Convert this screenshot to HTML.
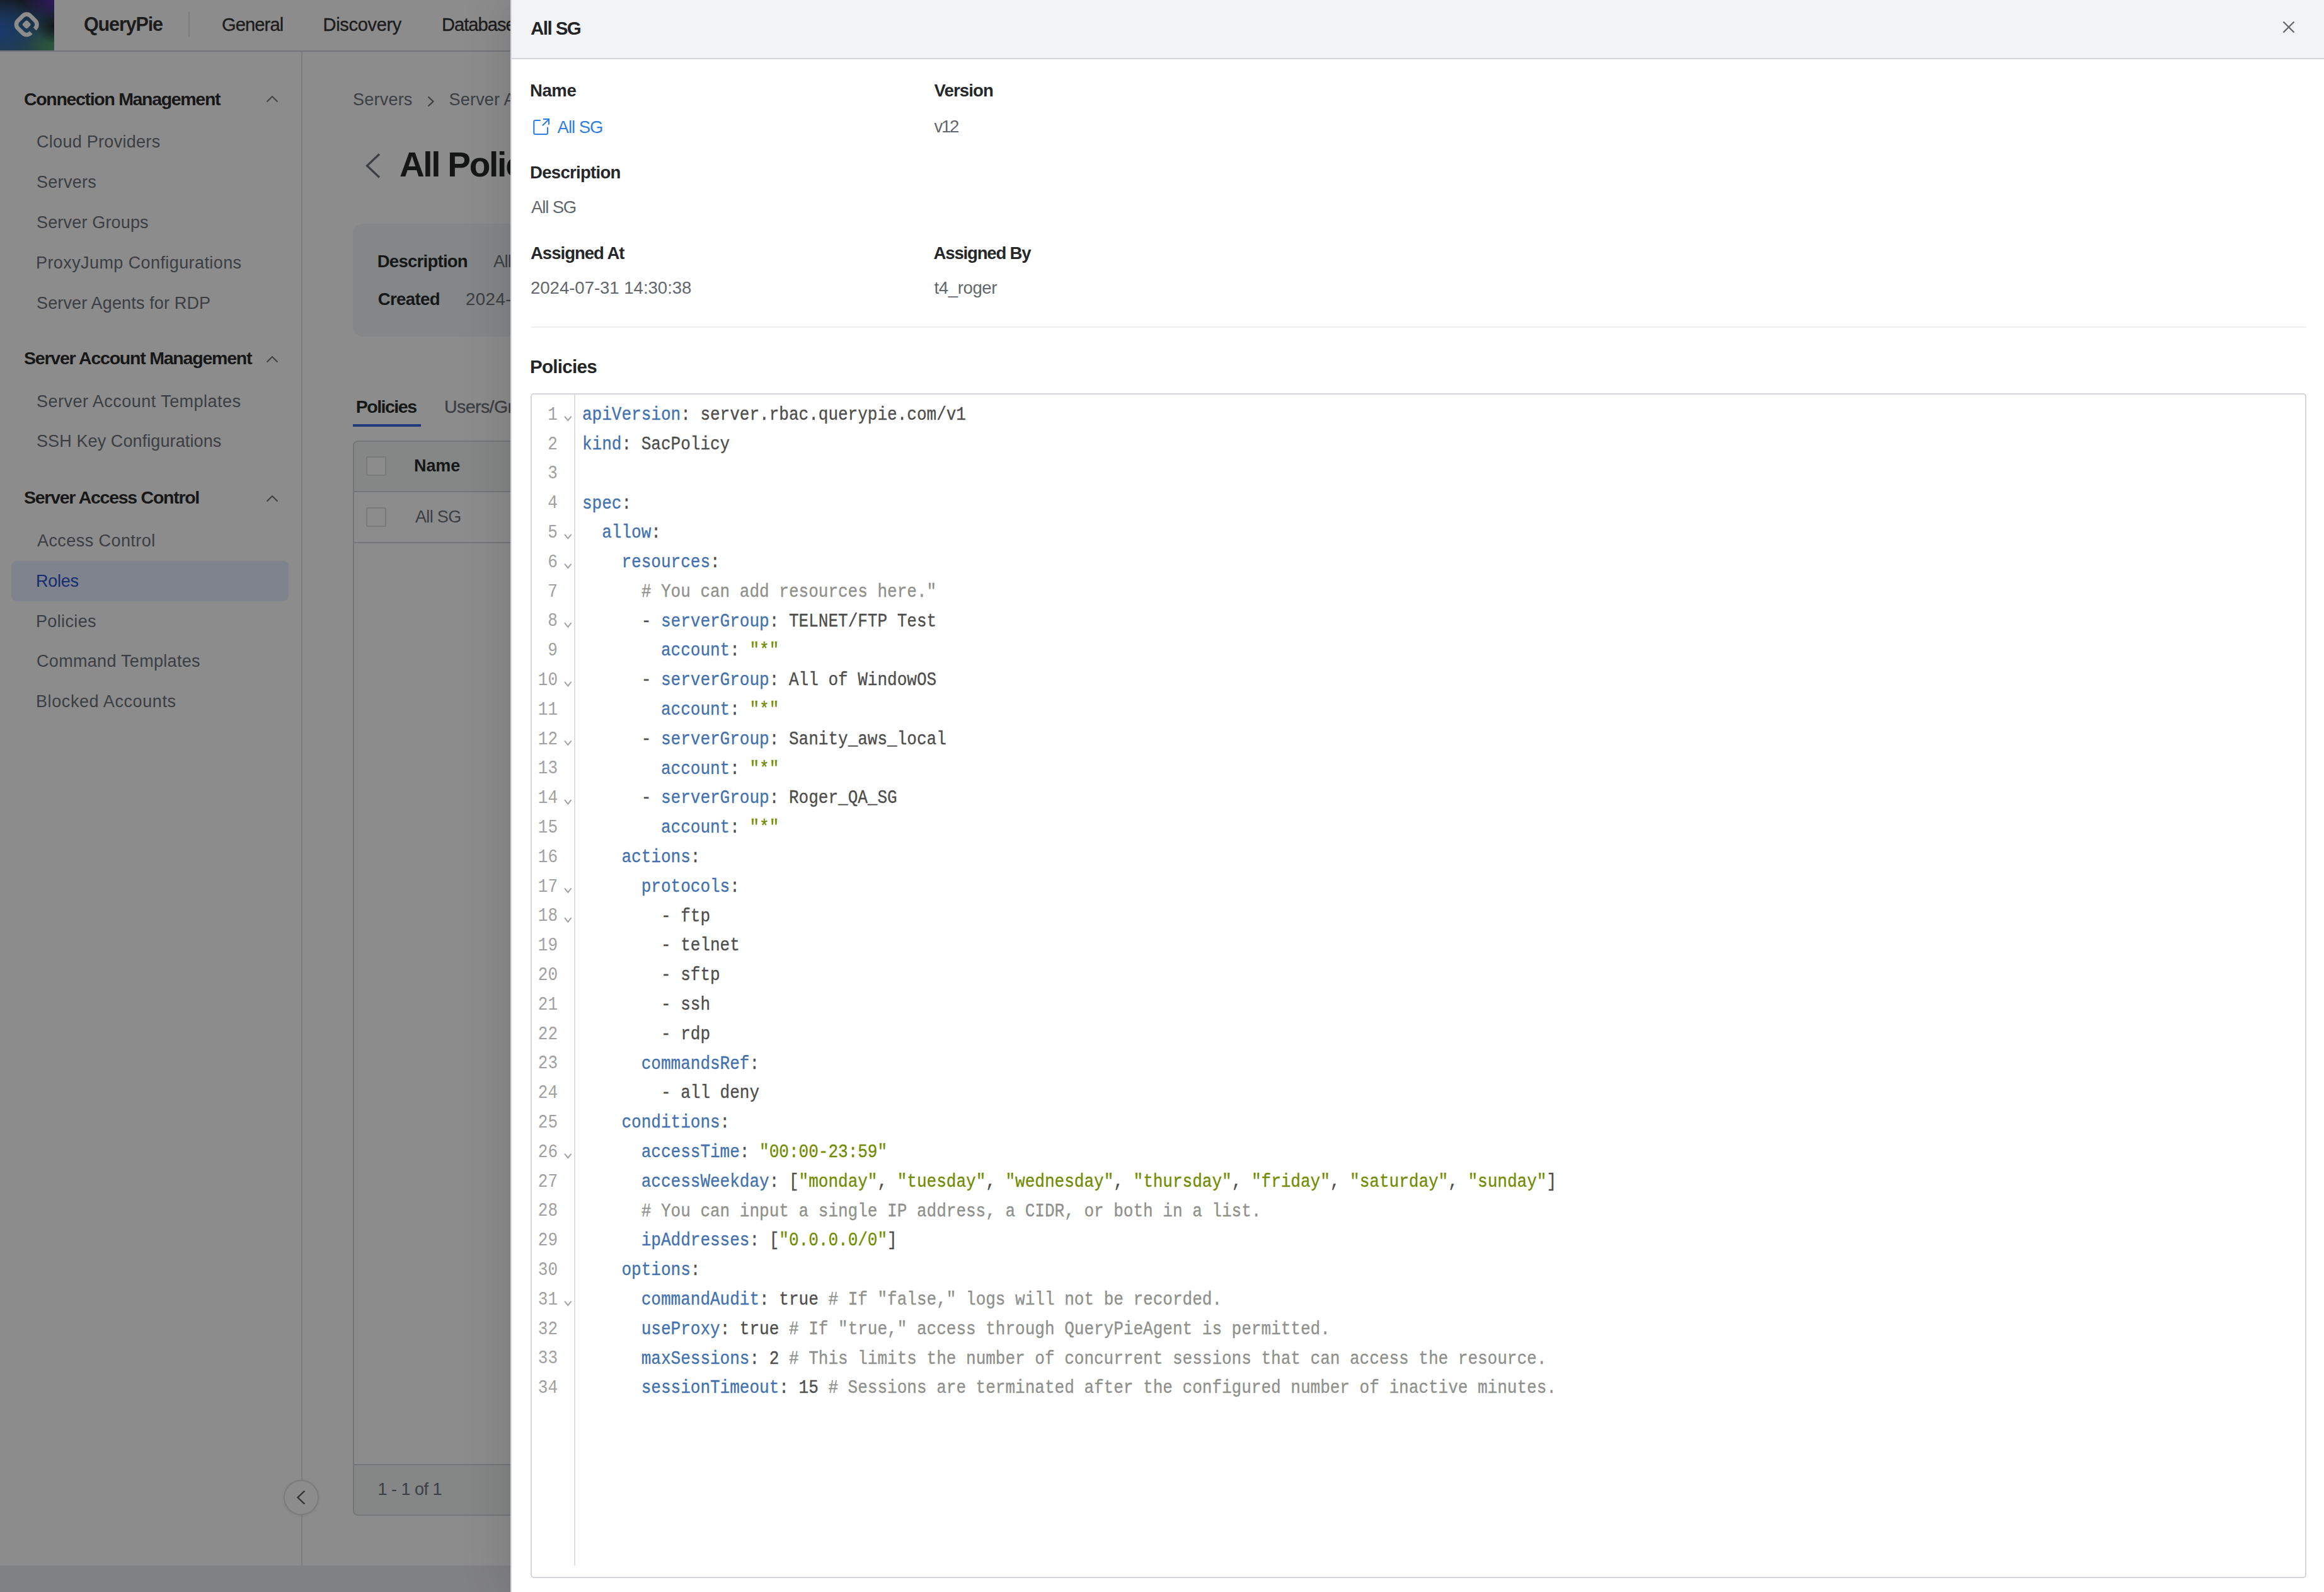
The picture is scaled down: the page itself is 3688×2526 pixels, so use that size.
<!DOCTYPE html><html><head><meta charset="utf-8"><title>QueryPie</title><style>
*{box-sizing:border-box}
html,body{margin:0;padding:0}
body{width:3688px;height:2526px;position:relative;overflow:hidden;background:#8c8c8c;font-family:'Liberation Sans',sans-serif}
.t{position:absolute;white-space:pre}
.a{position:absolute}
.code{position:absolute;left:924px;top:635.12px;font-family:'Liberation Mono',monospace;font-size:30px;line-height:46.8px;color:#4d4d4c;white-space:pre;-webkit-text-stroke:0.35px currentColor;transform:scaleX(0.86736);transform-origin:0 0}
.code div{height:46.8px}
.k{color:#4271ae} .s{color:#718c00} .c{color:#8e908c}
.gut{position:absolute;left:0;width:885px;transform:scaleX(0.86736);transform-origin:885px 0;top:634.82px;font-family:'Liberation Mono',monospace;font-size:30px;line-height:46.8px;color:#a0a0a0;white-space:pre;text-align:right}
</style></head><body>
<div class="a" style="left:0;top:80px;width:3688px;height:2px;background:#737578"></div>
<div class="a" style="left:0;top:0;width:86px;height:80px;background:radial-gradient(ellipse 60% 40% at 100% 0%,#30195c 0,rgba(48,25,92,0) 100%),radial-gradient(ellipse 35% 35% at 100% 52%,#131718 0,rgba(19,23,24,0) 100%),radial-gradient(ellipse 70% 70% at 0% 62%,#1b3a6c 0,rgba(27,58,108,0) 100%),radial-gradient(ellipse 60% 60% at 100% 100%,#2e5a3b 0,rgba(46,90,59,0) 100%),linear-gradient(180deg,#151a24 0%,#1a2c3e 35%,#1f3d4c 70%,#223f48 100%)"></div>
<svg class="a" style="left:0;top:0" width="86" height="80" viewBox="0 0 86 80"><g transform="translate(42.2 38.9) rotate(45)"><rect x="-14" y="-14" width="28" height="28" rx="8.5" fill="none" stroke="#8c8c8c" stroke-width="6.6" stroke-dasharray="25.6 8.2 63.6"/><rect x="-5.3" y="-5.3" width="10.6" height="10.6" rx="3" fill="#8c8c8c"/></g></svg>
<div class="t" style="left:133px;top:23.07px;font-size:30.5px;line-height:30.5px;font-weight:700;letter-spacing:-1.14px;color:#1c1c1c;">QueryPie</div>
<div class="a" style="left:299px;top:19px;width:2px;height:40px;background:#7b7c7e"></div>
<div class="t" style="left:352px;top:24.85px;font-size:29px;line-height:29px;font-weight:400;letter-spacing:-0.83px;color:#1c1c1c;-webkit-text-stroke:0.35px #1c1c1c;">General</div>
<div class="t" style="left:512.5px;top:24.85px;font-size:29px;line-height:29px;font-weight:400;letter-spacing:-0.31px;color:#1c1c1c;-webkit-text-stroke:0.35px #1c1c1c;">Discovery</div>
<div class="t" style="left:701px;top:24.85px;font-size:29px;line-height:29px;font-weight:400;letter-spacing:-0.92px;color:#1c1c1c;-webkit-text-stroke:0.35px #1c1c1c;">Databases</div>
<div class="a" style="left:478px;top:82px;width:2px;height:2402px;background:#7b7c7e"></div>
<div class="t" style="left:38px;top:143.28px;font-size:28.5px;line-height:28.5px;font-weight:700;letter-spacing:-1.32px;color:#171717;">Connection Management</div>
<div class="t" style="left:38px;top:554.38px;font-size:28.5px;line-height:28.5px;font-weight:700;letter-spacing:-1.22px;color:#171717;">Server Account Management</div>
<div class="t" style="left:38px;top:775.17px;font-size:28.5px;line-height:28.5px;font-weight:700;letter-spacing:-1.27px;color:#171717;">Server Access Control</div>
<svg class="a" style="left:420px;top:147px" width="24" height="20" viewBox="0 0 24 20"><polyline points="3.5,14.5 12,6 20.5,14.5" fill="none" stroke="#3b3e42" stroke-width="1.9"/></svg>
<svg class="a" style="left:420px;top:559.5px" width="24" height="20" viewBox="0 0 24 20"><polyline points="3.5,14.5 12,6 20.5,14.5" fill="none" stroke="#3b3e42" stroke-width="1.9"/></svg>
<svg class="a" style="left:420px;top:780.5px" width="24" height="20" viewBox="0 0 24 20"><polyline points="3.5,14.5 12,6 20.5,14.5" fill="none" stroke="#3b3e42" stroke-width="1.9"/></svg>
<div class="a" style="left:18px;top:890px;width:440px;height:64px;border-radius:9px;background:#7f838e"></div>
<div class="t" style="left:58px;top:212.15px;font-size:27px;line-height:27px;font-weight:400;letter-spacing:0.29px;color:#3b3e42;">Cloud Providers</div>
<div class="t" style="left:58px;top:276.15px;font-size:27px;line-height:27px;font-weight:400;letter-spacing:0.3px;color:#3b3e42;">Servers</div>
<div class="t" style="left:58px;top:339.75px;font-size:27px;line-height:27px;font-weight:400;letter-spacing:0.17px;color:#3b3e42;">Server Groups</div>
<div class="t" style="left:57px;top:403.85px;font-size:27px;line-height:27px;font-weight:400;letter-spacing:0.41px;color:#3b3e42;">ProxyJump Configurations</div>
<div class="t" style="left:58px;top:467.95px;font-size:27px;line-height:27px;font-weight:400;letter-spacing:0.15px;color:#3b3e42;">Server Agents for RDP</div>
<div class="t" style="left:58px;top:623.85px;font-size:27px;line-height:27px;font-weight:400;letter-spacing:0.47px;color:#3b3e42;">Server Account Templates</div>
<div class="t" style="left:58px;top:687.45px;font-size:27px;line-height:27px;font-weight:400;letter-spacing:0.1px;color:#3b3e42;">SSH Key Configurations</div>
<div class="t" style="left:59px;top:845.45px;font-size:27px;line-height:27px;font-weight:400;letter-spacing:0.43px;color:#3b3e42;">Access Control</div>
<div class="t" style="left:57px;top:909.45px;font-size:27px;line-height:27px;font-weight:400;letter-spacing:-0.25px;color:#162d6e;">Roles</div>
<div class="t" style="left:57px;top:973.05px;font-size:27px;line-height:27px;font-weight:400;letter-spacing:0.36px;color:#3b3e42;">Policies</div>
<div class="t" style="left:58px;top:1035.85px;font-size:27px;line-height:27px;font-weight:400;letter-spacing:0.31px;color:#3b3e42;">Command Templates</div>
<div class="t" style="left:57px;top:1100.35px;font-size:27px;line-height:27px;font-weight:400;letter-spacing:0.59px;color:#3b3e42;">Blocked Accounts</div>
<div class="t" style="left:560px;top:145.05px;font-size:27px;line-height:27px;font-weight:400;letter-spacing:0.22px;color:#3b3e42;">Servers</div>
<svg class="a" style="left:674px;top:150px" width="20" height="22" viewBox="0 0 20 22"><polyline points="5.5,3.5 13.5,11 5.5,18.5" fill="none" stroke="#3b3e42" stroke-width="2.2"/></svg>
<div class="t" style="left:712.4px;top:145.05px;font-size:27px;line-height:27px;font-weight:400;letter-spacing:0.24px;color:#3b3e42;">Server Access Control</div>
<svg class="a" style="left:574px;top:240px" width="34" height="46" viewBox="0 0 34 46"><polyline points="28,4.5 8.5,23 28,41.5" fill="none" stroke="#3b3e42" stroke-width="3.3"/></svg>
<div class="t" style="left:633.9px;top:234.05px;font-size:55px;line-height:55px;font-weight:700;letter-spacing:-2.27px;color:#151616;">All Policies</div>
<div class="a" style="left:560px;top:355px;width:600px;height:179px;border-radius:16px;background:#858688"></div>
<div class="t" style="left:598.7px;top:400.62px;font-size:27.5px;line-height:27.5px;font-weight:700;letter-spacing:-0.73px;color:#161717;">Description</div>
<div class="t" style="left:783px;top:400.62px;font-size:27.5px;line-height:27.5px;font-weight:400;letter-spacing:-0.86px;color:#3b3e42;">All SG</div>
<div class="t" style="left:599.7px;top:460.73px;font-size:27.5px;line-height:27.5px;font-weight:700;letter-spacing:-0.58px;color:#161717;">Created</div>
<div class="t" style="left:739px;top:460.73px;font-size:27.5px;line-height:27.5px;font-weight:400;letter-spacing:0.5px;color:#3b3e42;">2024-07-31 14:30:38</div>
<div class="t" style="left:564.7px;top:630.88px;font-size:28.5px;line-height:28.5px;font-weight:700;letter-spacing:-1.49px;color:#161717;">Policies</div>
<div class="t" style="left:705px;top:630.88px;font-size:28.5px;line-height:28.5px;font-weight:400;letter-spacing:-0.57px;color:#3b3e42;-webkit-text-stroke:0.35px #3b3e42;">Users/Groups</div>
<div class="a" style="left:560px;top:673px;width:108px;height:4px;background:#21397d"></div>
<div class="a" style="left:560px;top:699px;width:700px;height:1706px;border:2px solid #747578;border-radius:8px;background:#8c8c8c;overflow:hidden"><div class="a" style="left:0;top:0;width:700px;height:80px;background:#858787;border-bottom:2px solid #747578"></div><div class="a" style="left:0;top:159px;width:700px;height:2px;background:#747578"></div><div class="a" style="left:0;top:1622px;width:700px;height:82px;background:#858787;border-top:2px solid #747578"></div></div>
<div class="a" style="left:581px;top:723.5px;width:31.5px;height:31px;border:2px solid #78797b;border-radius:3px;background:#8c8c8c"></div>
<div class="a" style="left:581px;top:804.5px;width:31.5px;height:31px;border:2px solid #78797b;border-radius:3px;background:#8c8c8c"></div>
<div class="t" style="left:657px;top:726.35px;font-size:27px;line-height:27px;font-weight:700;letter-spacing:-0.1px;color:#161717;">Name</div>
<div class="t" style="left:659px;top:807.05px;font-size:27px;line-height:27px;font-weight:400;letter-spacing:-0.66px;color:#3b3e42;">All SG</div>
<div class="t" style="left:599.6px;top:2350.05px;font-size:27px;line-height:27px;font-weight:400;letter-spacing:-0.51px;color:#3b3e42;">1 - 1 of 1</div>
<div class="a" style="left:0;top:2484px;width:3688px;height:42px;background:#808183"></div>
<div class="a" style="left:450px;top:2348px;width:56px;height:56px;border-radius:50%;border:2px solid #7b7c7e;background:#8c8c8c;box-shadow:0 1px 4px rgba(0,0,0,0.08)"></div>
<svg class="a" style="left:466px;top:2360px" width="24" height="32" viewBox="0 0 24 32"><polyline points="17.5,5.5 6.5,16 17.5,26.5" fill="none" stroke="#2d3033" stroke-width="2.3"/></svg>
<div class="a" style="left:810px;top:0;width:2878px;height:2526px;background:#fff;box-shadow:-6px 0 70px rgba(0,0,0,0.13)"></div>
<div class="a" style="left:810px;top:0;width:2px;height:2526px;background:#d6d8dc"></div>
<div class="a" style="left:812px;top:0;width:2876px;height:92px;background:#f2f3f5;border-bottom:2px solid #d1d3d8;height:94px"></div>
<div class="t" style="left:842px;top:29.82px;font-size:29.5px;line-height:29.5px;font-weight:700;letter-spacing:-1.54px;color:#222426;">All SG</div>
<svg class="a" style="left:3618px;top:29px" width="28" height="28" viewBox="0 0 28 28"><path d="M5.5 5.5L22.5 22.5M22.5 5.5L5.5 22.5" stroke="#62676b" stroke-width="2.3" fill="none"/></svg>
<div class="t" style="left:841px;top:129.82px;font-size:27.5px;line-height:27.5px;font-weight:700;letter-spacing:-0.4px;color:#25272a;">Name</div>
<svg class="a" style="left:838px;top:180px" width="40" height="40" viewBox="838 180 40 40"><path d="M857.8 191H849.3Q847.3 191 847.3 193V211Q847.3 213 849.3 213H867Q869 213 869 211V201.8" fill="none" stroke="#2b7de0" stroke-width="2.1"/><path d="M860.9 199.3L870.3 189.9M862 189H871V197.8" fill="none" stroke="#2b7de0" stroke-width="2.1"/></svg>
<div class="t" style="left:884.6px;top:187.62px;font-size:27.5px;line-height:27.5px;font-weight:400;letter-spacing:-1.04px;color:#2f7fe0;">All SG</div>
<div class="t" style="left:1482.6px;top:129.93px;font-size:27.5px;line-height:27.5px;font-weight:700;letter-spacing:-0.87px;color:#25272a;">Version</div>
<div class="t" style="left:1482.6px;top:186.82px;font-size:27.5px;line-height:27.5px;font-weight:400;letter-spacing:-2.3px;color:#61676d;">v12</div>
<div class="t" style="left:841px;top:259.73px;font-size:27.5px;line-height:27.5px;font-weight:700;letter-spacing:-0.69px;color:#25272a;">Description</div>
<div class="t" style="left:843px;top:314.93px;font-size:27.5px;line-height:27.5px;font-weight:400;letter-spacing:-1.14px;color:#61676d;">All SG</div>
<div class="t" style="left:842px;top:387.52px;font-size:27.5px;line-height:27.5px;font-weight:700;letter-spacing:-0.99px;color:#25272a;">Assigned At</div>
<div class="t" style="left:842px;top:443.12px;font-size:27.5px;line-height:27.5px;font-weight:400;letter-spacing:0px;color:#61676d;">2024-07-31 14:30:38</div>
<div class="t" style="left:1481.6px;top:387.52px;font-size:27.5px;line-height:27.5px;font-weight:700;letter-spacing:-1.16px;color:#25272a;">Assigned By</div>
<div class="t" style="left:1482.6px;top:443.12px;font-size:27.5px;line-height:27.5px;font-weight:400;letter-spacing:-0.37px;color:#61676d;">t4_roger</div>
<div class="t" style="left:841px;top:566.92px;font-size:29.5px;line-height:29.5px;font-weight:700;letter-spacing:-0.71px;color:#222426;">Policies</div>
<div class="a" style="left:843px;top:518px;width:2817px;height:2px;background:#efeff0"></div>
<div class="a" style="left:842px;top:624px;width:2818px;height:1880px;border:2px solid #d3d5da;border-radius:5px"></div>
<div class="a" style="left:911px;top:626px;width:2px;height:1858px;background:#dedfe1"></div>
<div class="gut"><div>1</div><div>2</div><div>3</div><div>4</div><div>5</div><div>6</div><div>7</div><div>8</div><div>9</div><div>10</div><div>11</div><div>12</div><div>13</div><div>14</div><div>15</div><div>16</div><div>17</div><div>18</div><div>19</div><div>20</div><div>21</div><div>22</div><div>23</div><div>24</div><div>25</div><div>26</div><div>27</div><div>28</div><div>29</div><div>30</div><div>31</div><div>32</div><div>33</div><div>34</div></div>
<svg class="a" style="left:0;top:0" width="920" height="2526" viewBox="0 0 920 2526"><polyline points="896,660.6 901.3,667.2 906.6,660.6" fill="none" stroke="#a3a3a3" stroke-width="2"/><polyline points="896,847.8 901.3,854.4 906.6,847.8" fill="none" stroke="#a3a3a3" stroke-width="2"/><polyline points="896,894.6 901.3,901.2 906.6,894.6" fill="none" stroke="#a3a3a3" stroke-width="2"/><polyline points="896,988.2 901.3,994.8 906.6,988.2" fill="none" stroke="#a3a3a3" stroke-width="2"/><polyline points="896,1081.8 901.3,1088.4 906.6,1081.8" fill="none" stroke="#a3a3a3" stroke-width="2"/><polyline points="896,1175.4 901.3,1182.0 906.6,1175.4" fill="none" stroke="#a3a3a3" stroke-width="2"/><polyline points="896,1269.0 901.3,1275.6 906.6,1269.0" fill="none" stroke="#a3a3a3" stroke-width="2"/><polyline points="896,1409.4 901.3,1416.0 906.6,1409.4" fill="none" stroke="#a3a3a3" stroke-width="2"/><polyline points="896,1456.2 901.3,1462.8 906.6,1456.2" fill="none" stroke="#a3a3a3" stroke-width="2"/><polyline points="896,1830.6 901.3,1837.2 906.6,1830.6" fill="none" stroke="#a3a3a3" stroke-width="2"/><polyline points="896,2064.6 901.3,2071.2 906.6,2064.6" fill="none" stroke="#a3a3a3" stroke-width="2"/></svg>
<div class="code"><div><span class="k">apiVersion</span>: server.rbac.querypie.com/v1</div><div><span class="k">kind</span>: SacPolicy</div><div></div><div><span class="k">spec</span>:</div><div>  <span class="k">allow</span>:</div><div>    <span class="k">resources</span>:</div><div>      <span class="c"># You can add resources here.&quot;</span></div><div>      - <span class="k">serverGroup</span>: TELNET/FTP Test</div><div>        <span class="k">account</span>: <span class="s">&quot;*&quot;</span></div><div>      - <span class="k">serverGroup</span>: All of WindowOS</div><div>        <span class="k">account</span>: <span class="s">&quot;*&quot;</span></div><div>      - <span class="k">serverGroup</span>: Sanity_aws_local</div><div>        <span class="k">account</span>: <span class="s">&quot;*&quot;</span></div><div>      - <span class="k">serverGroup</span>: Roger_QA_SG</div><div>        <span class="k">account</span>: <span class="s">&quot;*&quot;</span></div><div>    <span class="k">actions</span>:</div><div>      <span class="k">protocols</span>:</div><div>        - ftp</div><div>        - telnet</div><div>        - sftp</div><div>        - ssh</div><div>        - rdp</div><div>      <span class="k">commandsRef</span>:</div><div>        - all deny</div><div>    <span class="k">conditions</span>:</div><div>      <span class="k">accessTime</span>: <span class="s">&quot;00:00-23:59&quot;</span></div><div>      <span class="k">accessWeekday</span>: [<span class="s">&quot;monday&quot;</span>, <span class="s">&quot;tuesday&quot;</span>, <span class="s">&quot;wednesday&quot;</span>, <span class="s">&quot;thursday&quot;</span>, <span class="s">&quot;friday&quot;</span>, <span class="s">&quot;saturday&quot;</span>, <span class="s">&quot;sunday&quot;</span>]</div><div>      <span class="c"># You can input a single IP address, a CIDR, or both in a list.</span></div><div>      <span class="k">ipAddresses</span>: [<span class="s">&quot;0.0.0.0/0&quot;</span>]</div><div>    <span class="k">options</span>:</div><div>      <span class="k">commandAudit</span>: true <span class="c"># If &quot;false,&quot; logs will not be recorded.</span></div><div>      <span class="k">useProxy</span>: true <span class="c"># If &quot;true,&quot; access through QueryPieAgent is permitted.</span></div><div>      <span class="k">maxSessions</span>: 2 <span class="c"># This limits the number of concurrent sessions that can access the resource.</span></div><div>      <span class="k">sessionTimeout</span>: 15 <span class="c"># Sessions are terminated after the configured number of inactive minutes.</span></div></div>
</body></html>
